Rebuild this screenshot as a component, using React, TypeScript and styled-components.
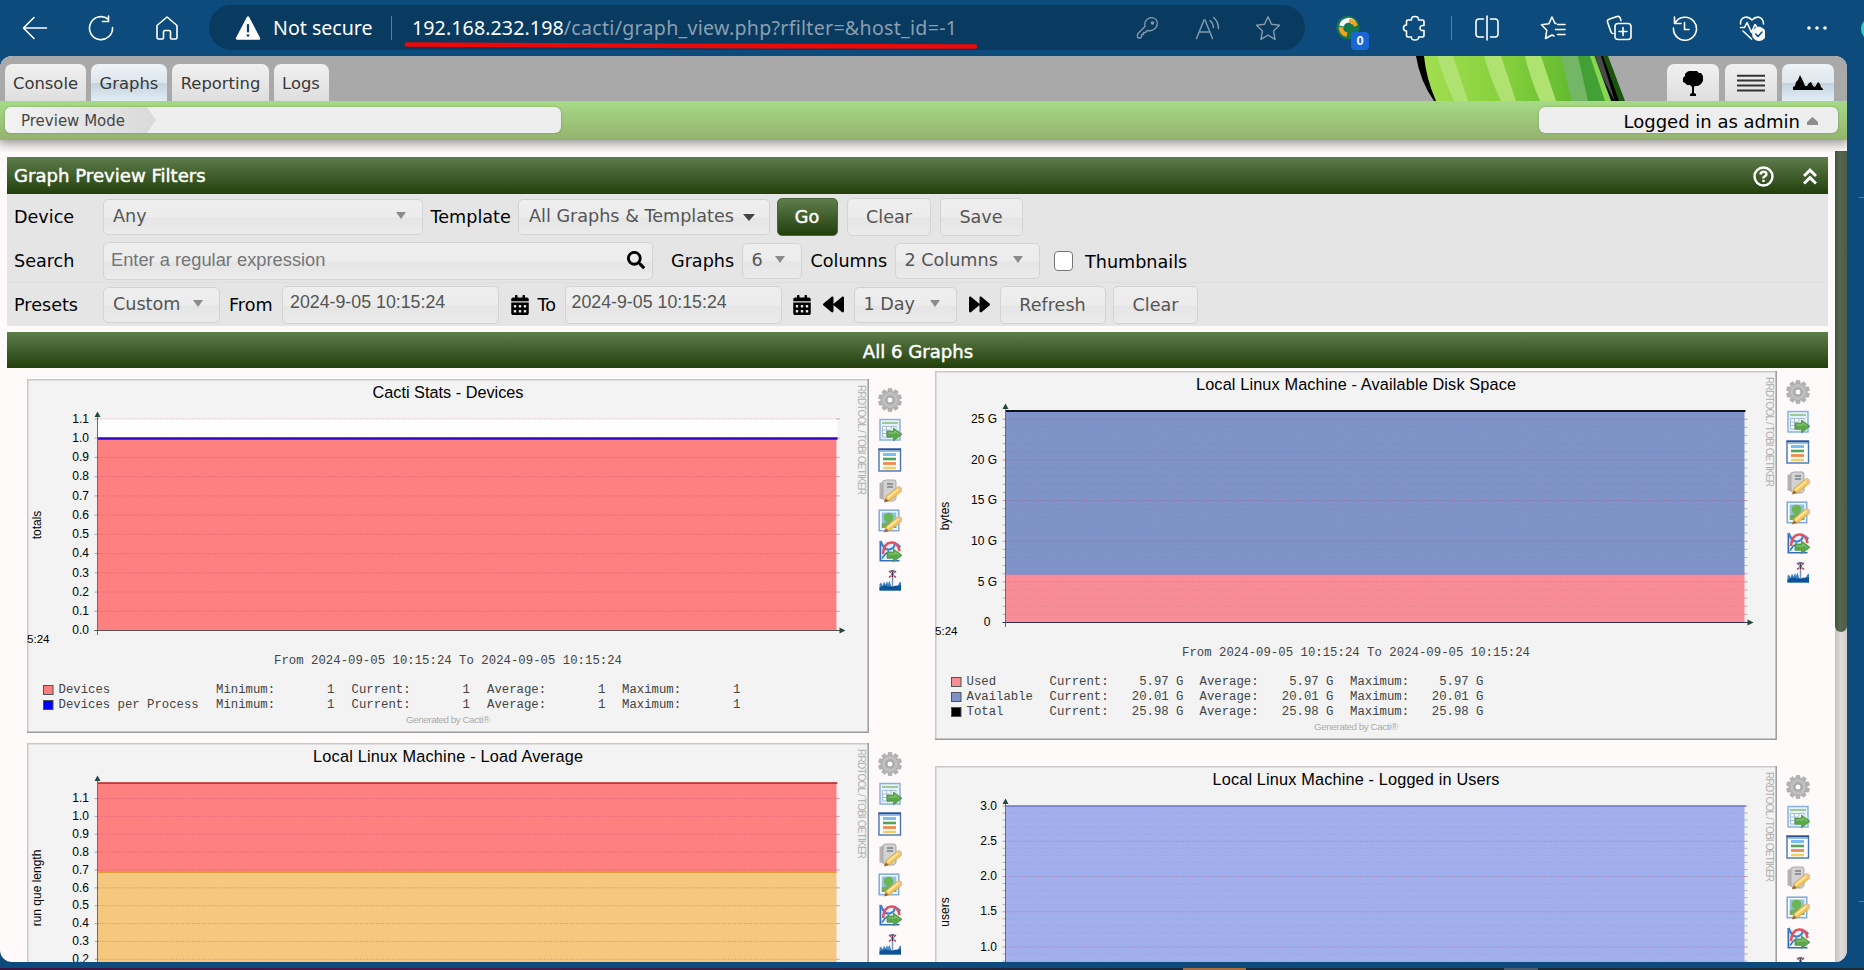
import React from "react";
import styled, { createGlobalStyle, css } from "styled-components";
import { FaBackward, FaForward, FaCalendarAlt, FaSearch } from "react-icons/fa";

const Global = createGlobalStyle`
  * { box-sizing: border-box; }
  html, body { margin: 0; padding: 0; height: 100%; overflow: hidden; }
  body { font-family: "DejaVu Sans", Verdana, sans-serif; font-size: 17.6px; background: #0c4b7b; }
`;

/* ---------- browser frame ---------- */

const Window = styled.div`
  width: 1864px;
  height: 970px;
  display: flex;
  flex-direction: column;
  background: #0c4b7b;
  overflow: hidden;
  position: relative;
`;

const Toolbar = styled.header`
  height: 56px;
  flex: none;
  display: flex;
  align-items: center;
  padding: 0 0 1px 22px;
  color: #fff;
  position: relative;
`;

const Tool = styled.span<{ $ml?: number; $dim?: boolean }>`
  position: relative;
  flex: none;
  width: 26px;
  height: 26px;
  margin-left: ${(p) => p.$ml ?? 0}px;
  color: ${(p) => (p.$dim ? "#8499ac" : "#fff")};
  svg {
    display: block;
    width: 26px;
    height: 26px;
    fill: none;
    stroke: currentColor;
    stroke-width: 1.6;
    stroke-linecap: round;
    stroke-linejoin: round;
  }
`;

const Address = styled.div`
  flex: none;
  width: 1096px;
  height: 45px;
  margin-left: 29px;
  padding-left: 26px;
  border-radius: 23px;
  background: #093a60;
  display: flex;
  align-items: center;
  font-family: "Noto Sans", "Open Sans", sans-serif;
  font-size: 19.6px;
  white-space: nowrap;
`;

const NotSecure = styled.span`
  width: 106px;
  margin-left: 12px;
`;

const Divider = styled.i<{ $ml: number }>`
  flex: none;
  width: 1px;
  height: 24px;
  margin-left: ${(p) => p.$ml}px;
  background: #5b7f9e;
`;

const Url = styled.span`
  width: 725px;
  margin-left: 20px;
  color: #8b9fb0;
  letter-spacing: 0.28px;
  b { font-weight: 400; color: #fff; letter-spacing: 0.1px; }
`;

const Badge = styled.span`
  position: absolute;
  left: 16px;
  top: 17px;
  width: 18px;
  height: 18px;
  border-radius: 4px;
  background: #1a66d6;
  font: 700 13px/18px "Liberation Sans", sans-serif;
  text-align: center;
`;

const Underline = styled.svg`
  position: absolute;
  left: 400px;
  top: 38px;
`;

const CopilotEdge = styled.i`
  position: absolute;
  right: -21px;
  top: 17px;
  width: 24px;
  height: 24px;
  border-radius: 12px;
  background: #2fd0c3;
`;

const TaskStrip = styled.div`
  position: absolute;
  left: 0;
  right: 0;
  bottom: 0;
  height: 2px;
  background: linear-gradient(90deg, #3b1440 0, #4a1a4a 25%, #1c2733 60%, #1c2b33);
`;

const TaskMark = styled.i<{ $x: number; $w: number; $c: string }>`
  position: absolute;
  left: ${(p) => p.$x}px;
  width: ${(p) => p.$w}px;
  top: 0;
  height: 2px;
  background: ${(p) => p.$c};
`;

const EdgeMark = styled.i<{ $y: number }>`
  position: absolute;
  right: 0;
  top: ${(p) => p.$y}px;
  width: 5px;
  height: 1px;
  background: #4b7ea5;
`;

/* ---------- page ---------- */

const Page = styled.div`
  width: 1847px;
  height: 906px;
  flex: none;
  border-radius: 12px;
  overflow: hidden;
  display: flex;
  flex-direction: column;
  background: #fffafa;
`;

const TabBar = styled.nav`
  height: 45px;
  flex: none;
  display: flex;
  align-items: flex-end;
  background: #a9a9a9;
  padding: 0 13px 0 5px;
`;

const tabFill = css<{ $active?: boolean }>`
  border-radius: 7px 7px 0 0;
  background: ${(p) =>
    p.$active
      ? "linear-gradient(#eef3f7 0, #dde6ec 50%, #c2d2de 51%, #e2edf6 100%)"
      : "linear-gradient(#f1f1f1, #dedede)"};
`;

const Tab = styled.span<{ $active?: boolean; $w: number; $ml?: number }>`
  ${tabFill}
  width: ${(p) => p.$w}px;
  margin-left: ${(p) => p.$ml ?? 0}px;
  height: 37px;
  line-height: 39px;
  text-align: center;
  font-size: 16.4px;
  color: #383838;
`;

const IconTab = styled.span<{ $active?: boolean }>`
  ${tabFill}
  width: 52px;
  height: 37px;
  margin-left: 5.5px;
  display: flex;
  align-items: center;
  justify-content: center;
`;

const Cactus = styled.svg`
  margin-left: auto;
  margin-right: 34px;
`;

const Crumbs = styled.div`
  height: 39px;
  flex: none;
  display: flex;
  justify-content: space-between;
  padding: 6px 9px 0 5px;
  background: linear-gradient(#a6da86, #94b36e);
  position: relative;
  box-shadow: 0 1px 11px 2px rgba(0, 0, 0, 0.45);
  clip-path: inset(0 0 -12px 0);
  z-index: 1;
`;

const CrumbBox = styled.div`
  width: 556px;
  height: 26px;
  border-radius: 6px;
  background: #eeeeee;
  overflow: hidden;
  box-shadow: 0 0 2px rgba(0, 0, 0, 0.3);
`;

const Crumb = styled.div`
  width: 151px;
  height: 26px;
  padding-left: 16px;
  line-height: 29px;
  font-size: 15px;
  color: #474747;
  background: linear-gradient(90deg, #f3f3f3, #d9d9d9);
  clip-path: polygon(0 0, 142px 0, 151px 50%, 142px 100%, 0 100%);
`;

const UserBox = styled.div`
  width: 299px;
  height: 26px;
  padding: 2px 20px 0 0;
  border-radius: 6px;
  background: #eeeeee;
  box-shadow: 0 0 2px rgba(0, 0, 0, 0.3);
  display: flex;
  align-items: center;
  justify-content: flex-end;
  gap: 7px;
  color: #000;
  font-size: 18px;
`;

const Body = styled.div`
  flex: 1;
  display: flex;
  min-height: 0;
`;

const Main = styled.main`
  width: 1835px;
  padding: 17px 7px 0;
  overflow: hidden;
`;

const Scroll = styled.div`
  width: 12px;
  margin-top: 11px;
  background: linear-gradient(90deg, #c4c1be, #dfdcd9 50%, #cfccc9);
`;

const Thumb = styled.div`
  height: 481px;
  border-radius: 0 0 6px 6px;
  background: linear-gradient(90deg, #42523c, #55674f 40%, #4c5d46);
`;

const Bar = styled.div<{ $h: number; $center?: boolean }>`
  height: ${(p) => p.$h}px;
  display: flex;
  align-items: center;
  justify-content: ${(p) => (p.$center ? "center" : "flex-start")};
  padding: ${(p) => (p.$center ? "2px 6px 0 7px" : "0 9px 1px 7px")};
  color: #fff;
  font-size: 18.1px;
  -webkit-text-stroke: 0.45px #fff;
  background: linear-gradient(#5f7d4b, #21400c);
`;

const BarIcons = styled.span`
  margin-left: auto;
  margin-right: 2px;
  margin-top: 2px;
  display: flex;
  align-items: center;
  gap: 29px;
`;

const Filters = styled.section`
  height: 132px;
  margin-bottom: 6px;
  background: #e5e5e5;
`;

const FilterRow = styled.div<{ $line?: boolean }>`
  height: 44px;
  display: flex;
  align-items: center;
  padding-left: 7px;
  white-space: nowrap;
  color: #000;
  border-top: 1px solid ${(p) => (p.$line ? "#dedede" : "transparent")};
`;

const Label = styled.label<{ $w: number; $pl?: number; $down?: boolean }>`
  flex: none;
  width: ${(p) => p.$w}px;
  padding-left: ${(p) => p.$pl ?? 0}px;
  padding-top: ${(p) => (p.$down ? 3 : 1)}px;
`;

const Control = styled.div<{ $w: number; $h?: number; $ml?: number; $pl?: number; $arial?: boolean }>`
  flex: none;
  width: ${(p) => p.$w}px;
  height: ${(p) => p.$h ?? 36}px;
  margin-left: ${(p) => p.$ml ?? 0}px;
  padding: 0 16px 2px ${(p) => p.$pl ?? 9}px;
  border: 1px solid #d3d3d3;
  border-radius: 5px;
  background: linear-gradient(#eeeeee 0, #ececec 50%, #e5e5e5 54%, #ebebeb 100%);
  color: #555;
  display: flex;
  align-items: center;
  justify-content: space-between;
  ${(p) => p.$arial && css`font-family: "Liberation Sans", Arial, sans-serif; font-size: 18.3px;`}
`;

const DateText = styled.span`
  font-size: 17.8px;
  padding-bottom: 2px;
`;

const Hint = styled.span`
  color: #767676;
`;

const Button = styled.button<{ $w: number; $ml: number; $primary?: boolean }>`
  flex: none;
  width: ${(p) => p.$w}px;
  height: 38px;
  margin-left: ${(p) => p.$ml}px;
  padding: 0;
  font: inherit;
  color: #555;
  border: 1px solid #d3d3d3;
  border-radius: 5px;
  background: linear-gradient(#eeeeee 0, #ececec 50%, #e5e5e5 54%, #ebebeb 100%);
  ${(p) =>
    p.$primary &&
    css`
      color: #fff;
      border-color: #4b663a;
      -webkit-text-stroke: 0.45px #fff;
      background: linear-gradient(#5f7d4b, #21400c);
    `}
`;

const Caret = styled.i<{ $dark?: boolean }>`
  flex: none;
  border: 5.5px solid transparent;
  border-bottom: 0;
  border-top: 7px solid ${(p) => (p.$dark ? "#444" : "#8b8b8b")};
  ${(p) => p.$dark && css`margin: 3px -2px 0 0; border-left-width: 6px; border-right-width: 6px;`}
`;

const Check = styled.span`
  width: 19px;
  height: 20px;
  margin: 0 12px 0 14px;
  background: #fff;
  border: 1.5px solid #767676;
  border-radius: 4px;
`;

const Glyph = styled.span<{ $ml: number }>`
  flex: none;
  display: inline-flex;
  margin-left: ${(p) => p.$ml}px;
`;

const SearchGlyph = styled(FaSearch)`
  margin-right: -9px;
  color: #000;
`;

const Graphs = styled.div`
  display: flex;
  padding-left: 20px;
`;

const Column = styled.div<{ $top: number; $gap: number }>`
  width: 908px;
  flex: none;
  padding-top: ${(p) => p.$top}px;
  display: flex;
  flex-direction: column;
  gap: ${(p) => p.$gap}px;
`;

const GraphRow = styled.div`
  display: flex;
  align-items: flex-start;
`;

const Actions = styled.div`
  display: flex;
  flex-direction: column;
  gap: 6.2px;
  margin: 9px 0 0 9px;
  height: 0;
  svg { width: 24px; height: 24px; flex: none; }
`;

/* ---------- chart ---------- */

interface Layer { from: number; to: number; fill: string }
interface Tick { y: number; label?: string; major?: boolean }
interface LegendRow { color: string; name: string; cells: { at: number; text: string; end?: boolean }[] }
interface ChartProps {
  title: string;
  titleWidth: number;
  unit: string;
  unitY: number;
  height: number;
  layers: Layer[];
  ticks: Tick[];
  top: { y: number; color: string; w: number };
  split?: { y: number; color: string };
  base?: string;
  plotBg?: number;
  legend?: LegendRow[];
}

const ChartSvg = styled.svg`
  display: block;
  flex: none;
  background: #f3f3f3;
  font-family: "Liberation Sans", Arial, sans-serif;
`;

const W = 842;
const L = 70.5;
const R = 809.5;
const ZERO = 251.5;

function Chart(p: ChartProps) {
  const n = p.legend?.length ?? 0;
  return (
    <ChartSvg width={W} height={p.height} viewBox={`0 0 ${W} ${p.height}`}>
      <path d={`M0.75 ${p.height}V0.75H${W}`} fill="none" stroke="#c9c9c9" strokeWidth="1.5" />
      <path d={`M${W - 0.8} 0V${p.height - 0.8}H0`} fill="none" stroke="#9b9b9b" strokeWidth="1.5" />
      <text x={421} y={18.500} fontSize={16.3} textAnchor="middle" textLength={p.titleWidth}>{p.title}</text>
      <text transform="translate(831 6) rotate(90)" fontSize={10} fill="#aeaeae" textLength={110}>RRDTOOL / TOBI OETIKER</text>
      <text transform={`translate(14 ${p.unitY}) rotate(-90)`} fontSize={12} textAnchor="middle">{p.unit}</text>
      {p.plotBg !== undefined && <rect x={L} y={p.plotBg} width={R - L + 1} height={ZERO - p.plotBg} fill="#fefefe" />}
      {p.layers.map((l) => (
        <rect key={l.fill} x={L} y={l.from} width={R - L} height={l.to - l.from} fill={l.fill} />
      ))}
      {p.ticks.map((t) => (
        <g key={t.y}>
          <line x1={L - 2} x2={R + 4} y1={t.y} y2={t.y} stroke={t.major ? "#b0406a" : "#707080"} strokeOpacity={t.major ? 0.38 : 0.16} strokeDasharray="1 1.3" />
          <path d={`M${L - 3} ${t.y}h4M${R} ${t.y}h3`} stroke="#806868" strokeOpacity="0.45" />
          {t.label && (
            <text x={62} y={t.y + 3.7} fontSize={12} textAnchor="end">{t.label}</text>
          )}
        </g>
      ))}
      {p.split && <line x1={L} x2={R} y1={p.split.y} y2={p.split.y} stroke={p.split.color} strokeWidth="1.8" />}
      <line x1={L} x2={R + 1} y1={p.top.y} y2={p.top.y} stroke={p.top.color} strokeWidth={p.top.w} />
      <path d={`M${L} 36V256`} stroke="#5b7474" strokeWidth="1" />
      <path d={`M${L - 3} ${ZERO}H${R + 6}`} stroke={p.base ?? "#5d5252"} strokeWidth="1.2" />
      <path d={`M${L - 3} 38L${L} 32.500L${L + 3} 38Z`} fill="#23493f" />
      <path d={`M${R + 3} ${ZERO - 3}L${R + 9} ${ZERO}L${R + 3} ${ZERO + 3}Z`} fill="#23493f" />
      {p.legend && (
        <g>
          <text x={0} y={264} fontSize={11.6}>5:24</text>
          <g fontFamily='"Liberation Mono", "Courier New", monospace' fontSize={12.3} fill="#444">
            <text x={247} y={284.5} textLength={348}>From 2024-09-05 10:15:24 To 2024-09-05 10:15:24</text>
            {p.legend.map((row, i) => (
              <g key={row.name}>
                <rect x={16.5} y={306.5 + i * 15} width={9.5} height={9} fill={row.color} stroke="#4b5555" />
                <text x={31.5} y={314.3 + i * 15}>{row.name}</text>
                {row.cells.map((c) => (
                  <text key={c.at} x={c.at} y={314.3 + i * 15} textAnchor={c.end ? "end" : "start"}>{c.text}</text>
                ))}
              </g>
            ))}
          </g>
          <text x={421} y={314 + n * 15} fontSize={9.9} fill="#ababab" textAnchor="middle" textLength={84}>Generated by Cacti®</text>
        </g>
      )}
    </ChartSvg>
  );
}

/* ---------- action icons ---------- */

const Pencil = () => (
  <g>
    <path d="M6.500 22.500l1.500-5L19 8.500q2-1.800 4 0t.3 4L12 21.500Z" fill="#f4c558" stroke="#c99a3a" strokeWidth=".6" />
    <path d="M9.500 19L21 9.500" stroke="#fbe6a4" strokeWidth="1.800" />
    <path d="M6 23.500l1.800-4 3 2.500Z" fill="#94653a" />
    <path d="M19 8.500l3.800 4 1-1q.6-2-1-3.200t-3-.6Z" fill="#eebf92" />
  </g>
);

const GreenArrow = () => (
  <g>
    <path d="M9 13h6.500V10l8.500 6.300-8.500 6.500v-3.500H9Z" fill="#5aa648" stroke="#4b9440" strokeWidth=".8" strokeLinejoin="round" />
    <path d="M10.500 15h6.500v-2l4 3.300" fill="none" stroke="#8fcb7c" strokeWidth="1" />
  </g>
);

const GEAR = Array.from({ length: 10 }, (_, i) => i * 36);

function ActionIcons() {
  return (
    <Actions>
      <svg viewBox="0 0 24 24">
        {GEAR.map((a) => (
          <path key={a} d="M10.200 0.500h3.600l.8 5h-5.200Z" fill="#b3b3b3" stroke="#999" strokeWidth=".5" transform={`rotate(${a} 12 12)`} />
        ))}
        <circle cx="12" cy="12" r="8.300" fill="#c0c0c0" stroke="#a6a6a6" strokeWidth=".5" />
        <circle cx="12" cy="12" r="5" fill="#adadad" />
        <circle cx="12" cy="12" r="3" fill="#fff" stroke="#9b9b9b" strokeWidth=".8" />
      </svg>
      <svg viewBox="0 0 24 24">
        <rect x="2" y="1.500" width="20" height="20.500" fill="#e4f0fb" stroke="#8ab3dc" strokeWidth="1.500" />
        <path d="M4 5h16" stroke="#8dc078" strokeWidth="1.600" />
        <path d="M4.500 8.500h14v10.500h-14Z" fill="#f6fafe" />
        <path d="M4.500 8.500h14M4.500 12h8M4.500 15.500h6M4.500 19h6M4.500 8.500V19M8.500 8.500V19M13 8.500v3M18 8.500v2" stroke="#a6bdd6" strokeWidth="1" fill="none" />
        <GreenArrow />
      </svg>
      <svg viewBox="0 0 24 24">
        <rect x="1" y="1" width="21.500" height="22" fill="#fbfdff" stroke="#4a72b4" strokeWidth="1.400" />
        <path d="M.5 1.500h22.500" stroke="#2e5288" strokeWidth="1.600" />
        <path d="M1.500 3h20.500" stroke="#7fa9df" strokeWidth="1.600" />
        <path d="M5 6.500h13" stroke="#7ebcf4" strokeWidth="3" />
        <path d="M5 11h13" stroke="#57a25a" strokeWidth="2.600" />
        <path d="M5 15.500h13" stroke="#f3894f" strokeWidth="2.800" />
        <path d="M5 20h13" stroke="#f1cf63" strokeWidth="2.600" />
      </svg>
      <svg viewBox="0 0 24 24">
        <path d="M1.500 4L7 2v19l-5.500-1.500Z" fill="#b3b3b3" />
        <path d="M5 2l3-1h9l1 2v17l-2 2H7l-2-2Z" fill="#d2d2d2" stroke="#a9a9a9" />
        <path d="M9 5h6M9 8h6" stroke="#7b8085" strokeWidth="1.300" />
        <Pencil />
      </svg>
      <svg viewBox="0 0 24 24">
        <rect x="1.200" y="1.200" width="19.500" height="20.500" fill="#f2f8fe" stroke="#84aedd" strokeWidth="1.600" />
        <rect x="3.800" y="3.500" width="14.500" height="15.500" fill="#8fc2dc" />
        <path d="M3.800 14.500q7-3 14.500 0V19H3.800Z" fill="#74ad5e" />
        <circle cx="10.500" cy="8.500" r="4.800" fill="#6bb552" />
        <Pencil />
      </svg>
      <svg viewBox="0 0 24 24">
        <path d="M2.500 2v19.500h19" fill="none" stroke="#346db8" strokeWidth="2" />
        <path d="M3.500 3L22 3v18H3.500Z" fill="#eaf2fa" />
        <path d="M2.500 2q4 10 9 8.500t5-4.500 6 2" fill="none" stroke="#3f7fcb" strokeWidth="2.200" />
        <path d="M5 15q1-11 8-11.500t8.500 8.500" fill="none" stroke="#e3515c" strokeWidth="2.600" />
        <path d="M4 19.500q3-5 7-7" fill="none" stroke="#3f77bf" strokeWidth="1.500" />
        <GreenArrow />
      </svg>
      <svg viewBox="0 0 24 24">
        <path d="M1.500 21.500V15l1.500-1.500 1.500 3L6 12.500l1.500 3L9 12l1 3 1.500-3.500 1.500 5 1.500 2 2.500-2 2.500 1.500 1.500-4 2-1.500V21.500Z" fill="#3a85c4" />
        <path d="M1.500 21.500V18.500l5-2 5 1 5-.5 6.500-1V21.500Z" fill="#0d5296" />
        <path d="M14.500 5v13" stroke="#7695b8" strokeWidth="1.500" />
        <path d="M11 2l7 6.500M18 2l-7 6.500" stroke="#b8323f" strokeWidth="1.300" strokeDasharray="2.500 1" />
        <path d="M12.500 2h4M14.500 3v5" stroke="#2b3e66" strokeWidth="1.500" />
      </svg>
    </Actions>
  );
}

/* ---------- data ---------- */

const ones = (): LegendRow["cells"] => [
  { at: 189, text: "Minimum:" }, { at: 307.5, text: "1", end: true },
  { at: 324.5, text: "Current:" }, { at: 443, text: "1", end: true },
  { at: 460, text: "Average:" }, { at: 578.5, text: "1", end: true },
  { at: 595, text: "Maximum:" }, { at: 713.5, text: "1", end: true },
];

const gigs = (v: string): LegendRow["cells"] => [
  { at: 114.5, text: "Current:" }, { at: 248.5, text: v, end: true },
  { at: 264.5, text: "Average:" }, { at: 398.5, text: v, end: true },
  { at: 415, text: "Maximum:" }, { at: 548.5, text: v, end: true },
];

const deviceTicks: Tick[] = Array.from({ length: 12 }, (_, i) => ({
  y: ZERO - i * 19.23, label: (i / 10).toFixed(1), major: true,
}));

const diskTicks: Tick[] = Array.from({ length: 26 }, (_, i) => ({
  y: ZERO - i * 8.13,
  major: i % 5 === 0,
  label: i === 0 ? "0\u2007" : i % 5 === 0 ? `${i} G` : undefined,
}));

/* the lowest gridlines of these two lie below the visible part of the page */
const loadTicks: Tick[] = Array.from({ length: 10 }, (_, i) => ({
  y: 252 - (i + 2) * 17.86, label: ((i + 2) / 10).toFixed(1), major: true,
}));

const userTicks: Tick[] = Array.from({ length: 23 }, (_, i) => i + 8).map((i) => ({
  y: ZERO - i * 7.05, major: i % 5 === 0, label: i % 5 === 0 ? (i / 10).toFixed(1) : undefined,
}));

/* ---------- app ---------- */

export default function App() {
  return (
    <Window>
      <Global />
      <Toolbar>
        <Tool>
          <svg viewBox="0 0 26 26"><path d="M24.500 13H2M12 2.500L1.500 13 12 23.500" /></svg>
        </Tool>
        <Tool $ml={40}>
          <svg viewBox="0 0 26 26"><path d="M24.500 12.500a11.500 11.500 0 1 1-4.500-8.500M20.500 1v5.500H14.500" /></svg>
        </Tool>
        <Tool $ml={40}>
          <svg viewBox="0 0 26 26"><path d="M3 10.500L13 2l10 8.500V22.500q0 1.500-1.500 1.500H17.500q-1 0-1-1V17q0-1.500-1.500-1.500h-4Q9.500 15.500 9.500 17v6q0 1-1 1H4.500Q3 24 3 22.500Z" /></svg>
        </Tool>
        <Address>
          <Tool>
            <svg viewBox="0 0 26 26">
              <path d="M13 2.500L2 23.500H24Z" fill="#fff" stroke="#fff" strokeWidth="2.500" />
              <path d="M13 10v6.500" stroke="#093a60" strokeWidth="2.200" />
              <circle cx="13" cy="20.500" r="1.300" fill="#093a60" stroke="none" />
            </svg>
          </Tool>
          <NotSecure>Not secure</NotSecure>
          <Divider $ml={12} />
          <Url><b>192.168.232.198</b>/cacti/graph_view.php?rfilter=&amp;host_id=-1</Url>
          <Tool $dim $ml={-3}>
            <svg viewBox="0 0 26 26"><path d="M3.500 22.500V19l7.500-7.500q-1-4 1.800-6.800T19.500 3q4 1.500 3.800 5.500t-3.500 6-6.300.8L11.500 17.500H9.500v2H7.500v2.500l-1 1Z" strokeWidth="1.300" /><circle cx="18.500" cy="8" r="1" fill="currentColor" /></svg>
          </Tool>
          <Tool $dim $ml={35}>
            <svg viewBox="0 0 26 26"><path d="M1.500 23.500L9 5h1l7.500 18.500M4.500 17H14.500M15 5.500q3 2.500 3.500 7M18.500 2.500q5 4 5 11" strokeWidth="1.500" /></svg>
          </Tool>
          <Tool $dim $ml={34}>
            <svg viewBox="0 0 26 26"><path d="M13 1.800l3.500 7.500 8 1-6 5.700 1.600 8.300L13 20.200l-7.100 4.100L7.500 16l-6-5.700 8-1Z" strokeWidth="1.400" /></svg>
          </Tool>
        </Address>
        <Tool $ml={30}>
          <svg viewBox="0 0 26 26">
            <circle cx="13" cy="12.500" r="11.500" fill="#14784e" stroke="none" />
            <path d="M19 8a7 7 0 0 0-12.500 3" stroke="#fff" strokeWidth="4.600" strokeLinecap="butt" />
            <path d="M6 12a7 7 0 0 0 6 7.500" stroke="#f2a31b" strokeWidth="4.600" strokeLinecap="butt" />
            <path d="M14 5.500q5 .5 7 5.500" stroke="#f2a31b" strokeWidth="4" strokeLinecap="butt" />
          </svg>
          <Badge>0</Badge>
        </Tool>
        <Tool $ml={41}>
          <svg viewBox="0 0 26 26"><path d="M4.500 6.500q0-1.500 1.500-1.500H9.500q-.5-3.500 3.500-3.500t3.500 3.500H20.500q1.500 0 1.500 1.500V10.500q-4-.5-4 2.500t4 2.500v5q0 1.500-1.500 1.500h-4q.5 3-3.500 3t-3.500-3H6q-1.500 0-1.500-1.500V16q-3 0-3-3t3-3Z" /></svg>
        </Tool>
        <Divider $ml={23} />
        <Tool $ml={22}>
          <svg viewBox="0 0 26 26"><path d="M13 1v24M9.500 4H5Q2 4 2 7v12q0 3 3 3h4.500M16.500 4H21q3 0 3 3v12q0 3-3 3h-4.500" /></svg>
        </Tool>
        <Tool $ml={40}>
          <svg viewBox="0 0 26 26"><path d="M16 8.500h-1L12 2 8.800 8.800 1.500 9.800l5.300 5.400L5.500 23.500 12 20l2 1M17.500 9.500h7.500M15.500 14.500H25M17.500 19.500H25" /></svg>
        </Tool>
        <Tool $ml={40}>
          <svg viewBox="0 0 26 26"><path d="M7 18.500q-1.500 0-2-1.500L1.500 7Q1 5 3 4.300L11 1.500q2.500-.5 3.200 1.500L15 5.500" /><rect x="9" y="8.500" width="16" height="16" rx="3" /><path d="M17 12.500v8M13 16.500h8" /></svg>
        </Tool>
        <Tool $ml={40}>
          <svg viewBox="0 0 26 26"><path d="M2.500 2v6.500H9M3 8A11.500 11.500 0 1 1 1.500 13M12.500 7.500V14.500H17" /></svg>
        </Tool>
        <Tool $ml={41}>
          <svg viewBox="0 0 26 26"><path d="M1.500 9Q1 3.500 6 2.200 10 1.500 13 5q3-3.500 7-2.800Q24.500 3.500 24.500 9M1.500 12.500h4L8 7.500l4.500 10L16 9.500l2 3h3M4 16l8.500 8" /><circle cx="20" cy="19" r="7" fill="#fff" stroke="none" /><path d="M16.800 19l2.200 2.500 4-4.500" stroke="#0c4b7b" /></svg>
        </Tool>
        <Tool $ml={39}>
          <svg viewBox="0 0 26 26"><g fill="#fff" stroke="none"><circle cx="5" cy="13" r="1.800" /><circle cx="13" cy="13" r="1.800" /><circle cx="21" cy="13" r="1.800" /></g></svg>
        </Tool>
        <CopilotEdge />
        <Underline width="580" height="14" viewBox="0 0 580 14">
          <path d="M7 6.500Q120 7 300 8L575 8.500" fill="none" stroke="#ee0808" strokeWidth="4.600" strokeLinecap="round" />
        </Underline>
      </Toolbar>

      <Page>
        <TabBar>
          <Tab $w={81}>Console</Tab>
          <Tab $w={76} $ml={5} $active>Graphs</Tab>
          <Tab $w={97} $ml={5}>Reporting</Tab>
          <Tab $w={55} $ml={4.5}>Logs</Tab>
          <Cactus width="212" height="45" viewBox="0 0 212 45">
            <defs>
              <linearGradient id="leaf" x1="0" x2="1">
                <stop offset="0" stopColor="#a2de50" />
                <stop offset=".45" stopColor="#84cf3c" />
                <stop offset=".8" stopColor="#62b92f" />
                <stop offset="1" stopColor="#3b9430" />
              </linearGradient>
            </defs>
            <path d="M184 0h8l17 45h-14Z" fill="#1a540d" />
            <path d="M0 0h187L203 45H18Q4 25 0 0Z" fill="#000" />
            <path d="M8 0H179L195 45H20Q10 22 8 0Z" fill="url(#leaf)" />
            <path d="M21 0h16l15 45H38Q27 22 21 0ZM68 0h17l15 45H85Q74 22 68 0ZM109 0h16l15 45h-16Q114 22 109 0Z" fill="#b0e272" />
            <path d="M145 0h17l11 45h-17Q150 22 145 0Z" fill="#73b766" />
            <path d="M162 0h13l14 45h-17Z" fill="#42a034" />
            <path d="M174 0h4l17 45h-6Z" fill="#88d652" />
            <path d="M179 0h6l14 45Q187 25 179 0Z" fill="#4b4b4b" />
          </Cactus>
          <IconTab>
            <svg width="24" height="26" viewBox="0 0 24 26">
              <path d="M8 1h8l2 2h2l2 3v5l-2 3-3 2h-3l-1 1v6l2 1v2H9v-2l2-1v-6l-2-2H6l-2-2-2-1V8l2-2V4l2-2Z" />
            </svg>
          </IconTab>
          <IconTab>
            <svg width="28" height="18" viewBox="0 0 28 18">
              <path d="M0 1.800h28M0 6.500h28M0 11.500h28M0 16.500h28" stroke="#333" strokeWidth="2" />
            </svg>
          </IconTab>
          <IconTab $active>
            <svg width="30" height="16" viewBox="0 0 30 16">
              <path d="M0 15v-3l2-1 1-4 2-2 2-5 3 6 2 5h2l2-3 2-1 2 4 2 1 3-5 2 2 1 3 2 2v1Z" />
            </svg>
          </IconTab>
        </TabBar>
        <Crumbs>
          <CrumbBox><Crumb>Preview Mode</Crumb></CrumbBox>
          <UserBox>
            Logged in as admin
            <svg width="11" height="8" viewBox="0 0 11 8"><path d="M5.500 0L11 5v3H0V5Z" fill="#8d8d8d" /></svg>
          </UserBox>
        </Crumbs>
        <Body>
          <Main>
            <Bar $h={37}>
              Graph Preview Filters
              <BarIcons>
                <svg width="21" height="21" viewBox="0 0 21 21" fill="none" stroke="#fff" strokeWidth="2.400">
                  <circle cx="10.500" cy="10.500" r="9" />
                  <path d="M7.500 8.500Q7.800 5.800 10.500 5.800T13.500 8.200Q13.500 9.500 11.800 10.300T10.500 12.500M10.500 13.800v2.200" />
                </svg>
                <svg width="14" height="17" viewBox="0 0 14 17" fill="none" stroke="#fff" strokeWidth="3">
                  <path d="M1 8L7 2.200 13 8M1 15.500L7 9.700l6 5.800" />
                </svg>
              </BarIcons>
            </Bar>
            <Filters>
              <FilterRow>
                <Label $w={89}>Device</Label>
                <Control $w={320}>Any<Caret /></Control>
                <Label $w={95} $pl={7.5}>Template</Label>
                <Control $w={252} $pl={10}>All Graphs &amp; Templates<Caret $dark /></Control>
                <Button $w={61} $ml={6.5} $primary>Go</Button>
                <Button $w={84} $ml={9.5}>Clear</Button>
                <Button $w={83} $ml={8.5}>Save</Button>
              </FilterRow>
              <FilterRow>
                <Label $w={89}>Search</Label>
                <Control $w={550} $h={38} $pl={7} $arial>
                  <Hint>Enter a regular expression</Hint>
                  <SearchGlyph size={18} />
                </Control>
                <Label $w={88.5} $pl={18}>Graphs</Label>
                <Control $w={60}>6<Caret /></Control>
                <Label $w={93} $pl={9}>Columns</Label>
                <Control $w={145.5}>2 Columns<Caret /></Control>
                <Check />
                <Label $w={110} $down>Thumbnails</Label>
              </FilterRow>
              <FilterRow $line>
                <Label $w={89}>Presets</Label>
                <Control $w={117}>Custom<Caret /></Control>
                <Label $w={62} $pl={9}>From</Label>
                <Control $w={217} $h={38} $pl={7} $arial><DateText>2024-9-05 10:15:24</DateText></Control>
                <Glyph $ml={10.500}><FaCalendarAlt size={20} /></Glyph>
                <Label $w={35} $pl={8}>To</Label>
                <Control $w={217} $h={38} $pl={6} $arial><DateText>2024-9-05 10:15:24</DateText></Control>
                <Glyph $ml={10}><FaCalendarAlt size={20} /></Glyph>
                <Glyph $ml={11.500}><FaBackward size={21} /></Glyph>
                <Control $w={103} $ml={9.500}>1 Day<Caret /></Control>
                <Glyph $ml={12}><FaForward size={21} /></Glyph>
                <Button $w={106} $ml={10}>Refresh</Button>
                <Button $w={85} $ml={7.500}>Clear</Button>
              </FilterRow>
            </Filters>
            <Bar $h={36} $center>All 6 Graphs</Bar>
            <Graphs>
              <Column $top={11} $gap={10}>
                <GraphRow>
                  <Chart
                    title="Cacti Stats - Devices" titleWidth={151} unit="totals" unitY={146} height={354} plotBg={40}
                    layers={[{ from: 59, to: ZERO, fill: "#ff8080" }]}
                    ticks={deviceTicks}
                    top={{ y: 59.500, color: "#2a0cc4", w: 2.400 }}
                    legend={[
                      { color: "#ff7d7d", name: "Devices", cells: ones() },
                      { color: "#0000ff", name: "Devices per Process", cells: ones() },
                    ]}
                  />
                  <ActionIcons />
                </GraphRow>
                <GraphRow>
                  <Chart
                    title="Local Linux Machine - Load Average" titleWidth={270} unit="run que length" unitY={145} height={354}
                    layers={[
                      { from: 40, to: 129, fill: "#ff8080" },
                      { from: 129, to: 252, fill: "#f5c77f" },
                    ]}
                    ticks={loadTicks}
                    top={{ y: 40, color: "#b81b20", w: 1.700 }}
                    split={{ y: 129, color: "#e59a3a" }}
                  />
                  <ActionIcons />
                </GraphRow>
              </Column>
              <Column $top={3} $gap={26}>
                <GraphRow>
                  <Chart
                    title="Local Linux Machine - Available Disk Space" titleWidth={320} unit="bytes" unitY={145} height={369}
                    layers={[
                      { from: 40, to: 203, fill: "#7f93c9" },
                      { from: 203, to: ZERO, fill: "#f98d97" },
                    ]}
                    ticks={diskTicks}
                    top={{ y: 40, color: "#10131d", w: 2 }}
                    split={{ y: 203, color: "#a287b2" }}
                    base="#30304c"
                    legend={[
                      { color: "#f98d97", name: "Used", cells: gigs("5.97 G") },
                      { color: "#7f93c9", name: "Available", cells: gigs("20.01 G") },
                      { color: "#000", name: "Total", cells: gigs("25.98 G") },
                    ]}
                  />
                  <ActionIcons />
                </GraphRow>
                <GraphRow>
                  <Chart
                    title="Local Linux Machine - Logged in Users" titleWidth={287} unit="users" unitY={146} height={354}
                    layers={[{ from: 40, to: ZERO, fill: "#a1b0ed" }]}
                    ticks={userTicks}
                    top={{ y: 40, color: "#6c78c2", w: 1.600 }}
                  />
                  <ActionIcons />
                </GraphRow>
              </Column>
            </Graphs>
          </Main>
          <Scroll><Thumb /></Scroll>
        </Body>
      </Page>
      <EdgeMark $y={197} />
      <EdgeMark $y={901} />
      <TaskStrip>
        <TaskMark $x={1183} $w={63} $c="#b06a35" />
        <TaskMark $x={1504} $w={34} $c="#4b5a66" />
      </TaskStrip>
    </Window>
  );
}
